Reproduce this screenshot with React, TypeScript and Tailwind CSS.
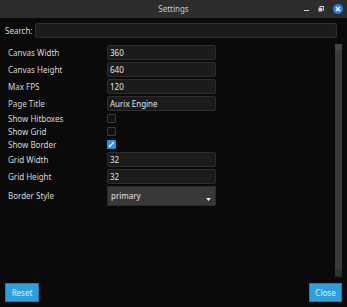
import { useState } from 'react'

const font = { fontFamily: '"Noto Sans", "Open Sans", sans-serif' }

function TextRow({ label, value }: { label: string; value: string }) {
  return (
    <div className="flex h-[15px] items-center">
      <span className="w-[107px] shrink-0 pl-[8px] text-[8px] text-[#d8d8d8]">{label}</span>
      <div className="flex h-[15px] w-[109px] items-center rounded-[2px] border border-[#2e2e2e] bg-[#1b1b1b] pl-[2px] text-[8px] text-[#e4e4e4]">
        {value}
      </div>
    </div>
  )
}

function CheckRow({ label, checked }: { label: string; checked?: boolean }) {
  return (
    <div className="flex h-[11px] items-center">
      <span className="w-[107px] shrink-0 pl-[8px] text-[8px] text-[#d8d8d8]">{label}</span>
      {checked ? (
        <div className="flex h-[9px] w-[9px] items-center justify-center rounded-[1px] bg-[#2b8fd9]">
          <svg width="7" height="7" viewBox="0 0 7 7">
            <path d="M1 6 L6 1" stroke="#fff" strokeWidth="1.2" />
            <path d="M1 4.5 L2 6" stroke="#fff" strokeWidth="1" />
          </svg>
        </div>
      ) : (
        <div className="h-[9px] w-[9px] rounded-[1px] border border-[#3c3c3c] bg-[#111]" />
      )}
    </div>
  )
}

export default function App() {
  const [search] = useState('')

  return (
    <div style={font} className="flex h-[307px] w-[347px] flex-col overflow-hidden bg-[#0a0a0a]">
      {/* Title bar */}
      <div className="relative flex h-[18px] items-center justify-center bg-[#2d2d2d]">
        <span className="text-[8px] text-[#c9c9c9]">Settings</span>
        <div className="absolute right-[4px] top-0 flex h-[18px] items-center gap-[9px]">
          <div className="mt-[3px] h-[1px] w-[5px] bg-[#d0d0d0]" />
          <svg width="6" height="6" viewBox="0 0 6 6">
            <rect x="2" y="0.5" width="3.5" height="3.5" fill="none" stroke="#d0d0d0" strokeWidth="1" />
            <rect x="0.5" y="2" width="3.5" height="3.5" fill="#d0d0d0" />
          </svg>
          <div className="flex h-[10px] w-[10px] items-center justify-center rounded-full bg-[#2b7de9]">
            <svg width="6" height="6" viewBox="0 0 6 6">
              <path d="M1 1 L5 5 M5 1 L1 5" stroke="#fff" strokeWidth="1.4" />
            </svg>
          </div>
        </div>
      </div>

      {/* Search */}
      <div className="mt-[5px] flex h-[15px] items-center gap-[3px] pl-[5px] pr-[10px]">
        <span className="text-[8px] text-[#d8d8d8]">Search:</span>
        <div className="h-[15px] flex-1 rounded-[2px] border border-[#2e2e2e] bg-[#1b1b1b] text-[8px]">{search}</div>
      </div>

      {/* Form + scrollbar */}
      <div className="mt-[6px] flex flex-1">
        <div className="flex flex-1 flex-col gap-[2px] pt-[1px]">
          <TextRow label="Canvas Width" value="360" />
          <TextRow label="Canvas Height" value="640" />
          <TextRow label="Max FPS" value="120" />
          <TextRow label="Page Title" value="Aurix Engine" />
          <CheckRow label="Show Hitboxes" />
          <CheckRow label="Show Grid" />
          <CheckRow label="Show Border" checked />
          <TextRow label="Grid Width" value="32" />
          <TextRow label="Grid Height" value="32" />
          <div className="flex h-[20px] items-center">
            <span className="w-[107px] shrink-0 pl-[8px] text-[8px] text-[#d8d8d8]">Border Style</span>
            <div className="relative flex h-[20px] w-[109px] items-start border border-[#2a2a2a] bg-[#383838] pl-[3px] pt-[3px] text-[8px] text-[#e4e4e4]">
              primary
              <svg className="absolute bottom-[4px] right-[4px]" width="5" height="3" viewBox="0 0 5 3">
                <path d="M0 0 H5 L2.5 3 Z" fill="#f0f0f0" />
              </svg>
            </div>
          </div>
        </div>
        <div className="mr-[5px] flex w-[7px] flex-col bg-[#3a3a3a]">
          <div className="h-[6px] border-b border-[#444] bg-[#454545]" />
          <div className="flex-1" />
          <div className="h-[7px] border border-[#2c2c2c] bg-[#333]" />
        </div>
      </div>

      {/* Footer */}
      <div className="mb-[5px] mt-[6px] flex items-center justify-between px-[5px]">
        <button className="flex h-[19px] w-[34px] items-center justify-center border border-[#1f7fb5] bg-[#2e9fda] text-[8px] text-[#e3eef6]">
          Reset
        </button>
        <button className="flex h-[19px] w-[33px] items-center justify-center border border-[#1f7fb5] bg-[#2e9fda] text-[8px] text-[#e3eef6]">
          Close
        </button>
      </div>
    </div>
  )
}
